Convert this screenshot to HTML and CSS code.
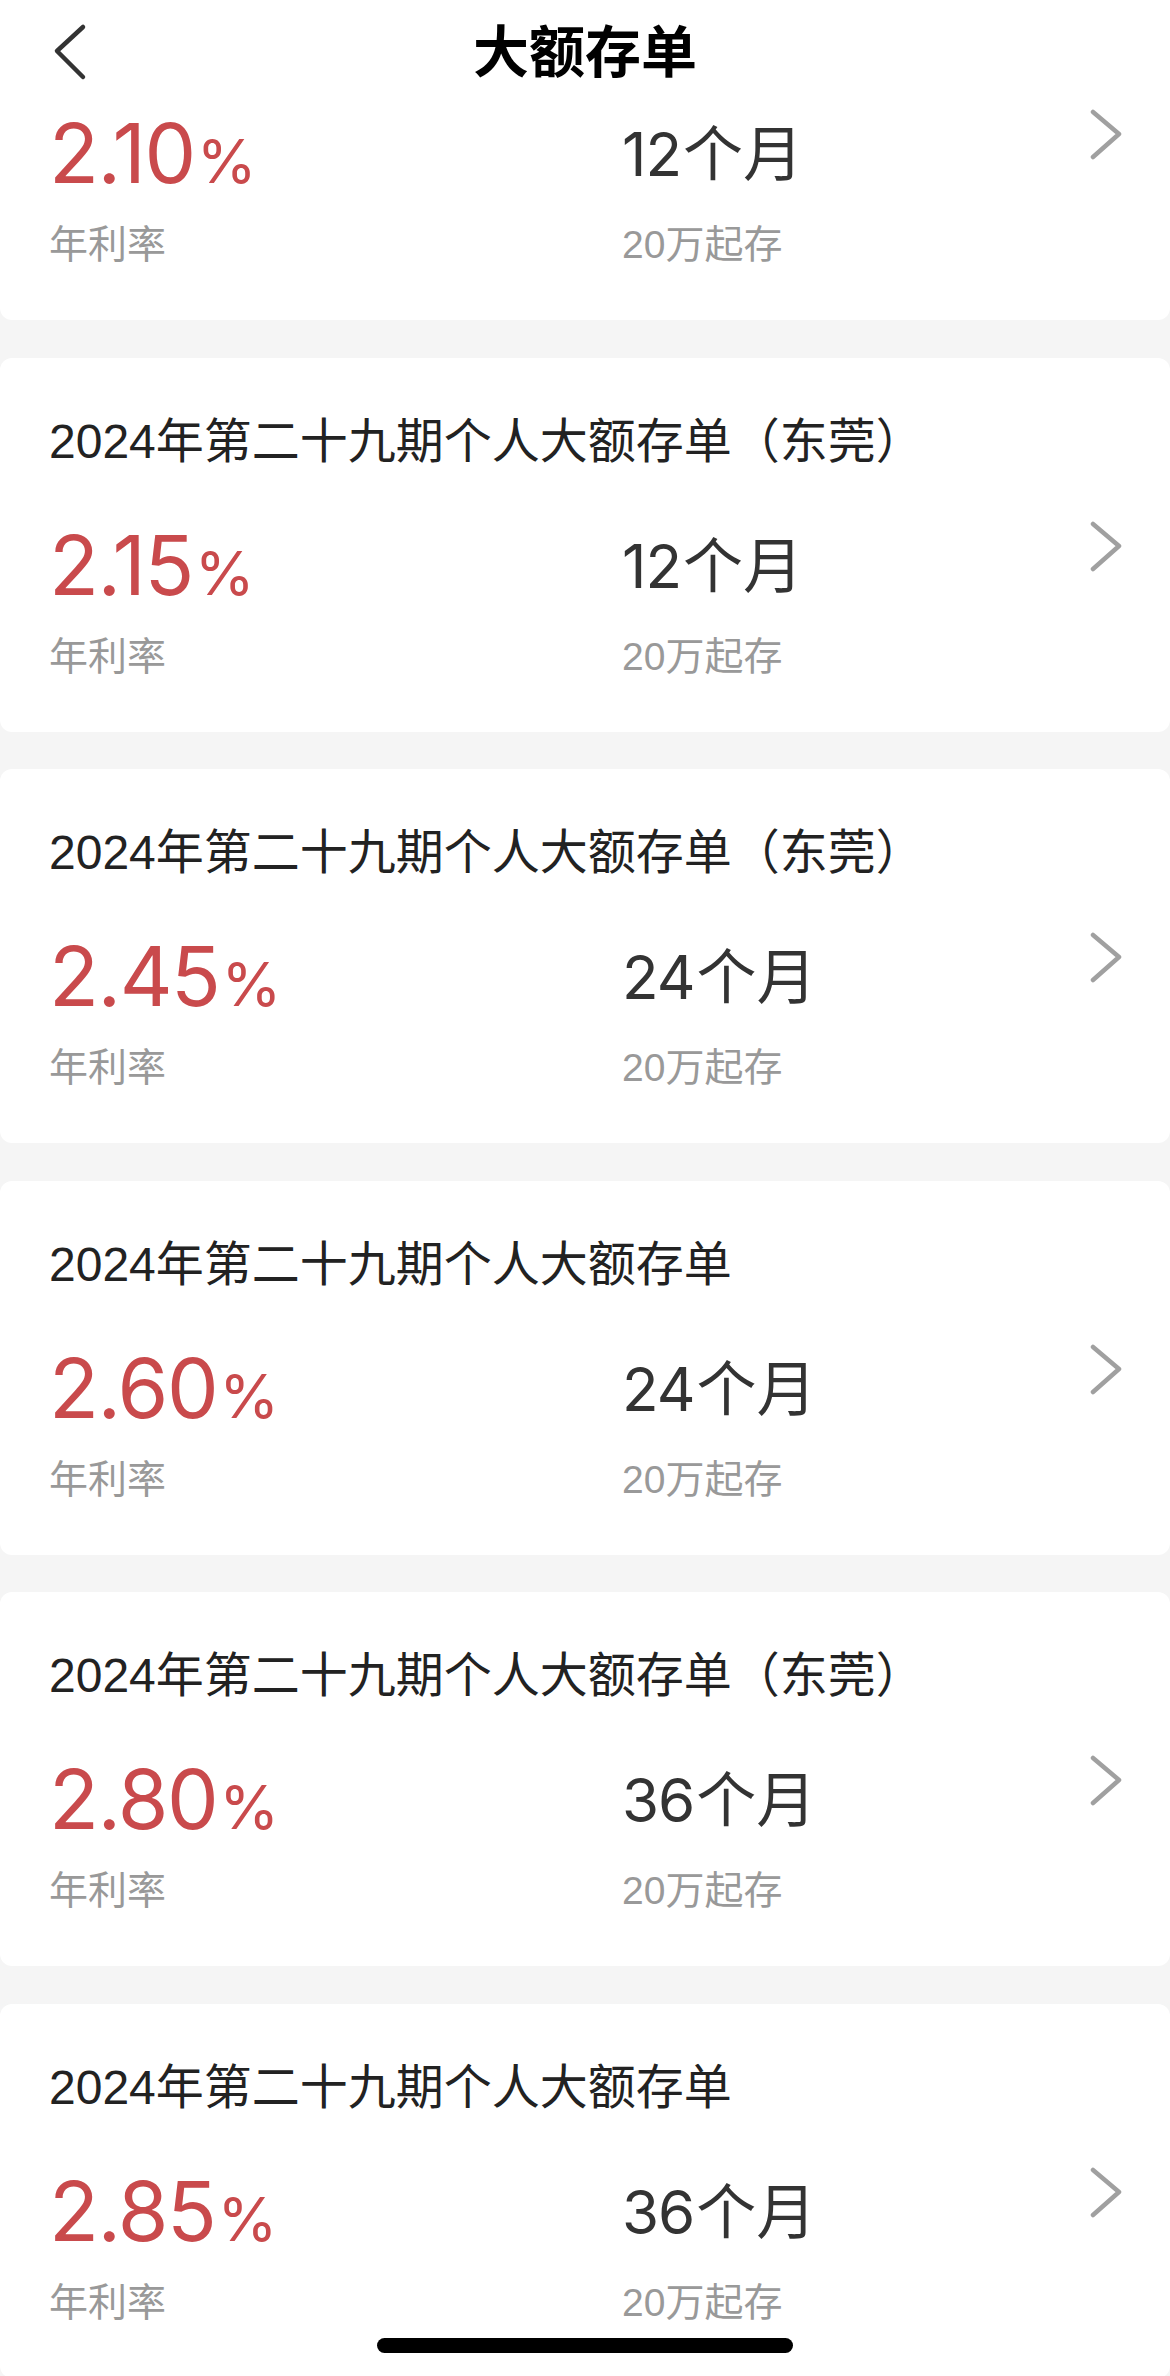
FILE: index.html
```html
<!DOCTYPE html>
<html lang="zh-CN">
<head>
    <meta charset="UTF-8">
    <meta name="viewport" content="width=device-width, initial-scale=1.0">
    <title>大额存单</title>
    <link rel="stylesheet" href="styles.css">
</head>
<body>

<div class="nav">
    <a class="nav-back" href="#">
        <svg width="40" height="60" viewBox="0 0 40 60"><polyline points="30,4 4,28 30,54" fill="none" stroke="#333" stroke-width="4.5" stroke-linecap="round" stroke-linejoin="round"/></svg>
    </a>
    <h1 class="nav-title">大额存单</h1>
    <span></span>
</div>

<div class="list">
    <!-- first card is scrolled up, its title is under the bar -->
    <div class="card card-first">
        <div class="card-body">
            <div class="col">
                <div class="rate"><span class="rate-num">2.10</span><span class="rate-unit">%</span></div>
                <div class="label">年利率</div>
            </div>
            <div class="col">
                <div class="term"><span class="term-num">12</span>个月</div>
                <div class="label">20万起存</div>
            </div>
            <svg class="chevron" width="32" height="51" viewBox="0 0 32 51"><polyline points="3,3 29,25 3,48" fill="none" stroke="#a0a0a0" stroke-width="4.5" stroke-linecap="round" stroke-linejoin="round"/></svg>
        </div>
    </div>

    <div class="card">
        <div class="card-title">2024年第二十九期个人大额存单（东莞）</div>
        <div class="card-body">
            <div class="col">
                <div class="rate"><span class="rate-num">2.15</span><span class="rate-unit">%</span></div>
                <div class="label">年利率</div>
            </div>
            <div class="col">
                <div class="term"><span class="term-num">12</span>个月</div>
                <div class="label">20万起存</div>
            </div>
            <svg class="chevron" width="32" height="51" viewBox="0 0 32 51"><polyline points="3,3 29,25 3,48" fill="none" stroke="#a0a0a0" stroke-width="4.5" stroke-linecap="round" stroke-linejoin="round"/></svg>
        </div>
    </div>

    <div class="card">
        <div class="card-title">2024年第二十九期个人大额存单（东莞）</div>
        <div class="card-body">
            <div class="col">
                <div class="rate"><span class="rate-num">2.45</span><span class="rate-unit">%</span></div>
                <div class="label">年利率</div>
            </div>
            <div class="col">
                <div class="term"><span class="term-num">24</span>个月</div>
                <div class="label">20万起存</div>
            </div>
            <svg class="chevron" width="32" height="51" viewBox="0 0 32 51"><polyline points="3,3 29,25 3,48" fill="none" stroke="#a0a0a0" stroke-width="4.5" stroke-linecap="round" stroke-linejoin="round"/></svg>
        </div>
    </div>

    <div class="card">
        <div class="card-title">2024年第二十九期个人大额存单</div>
        <div class="card-body">
            <div class="col">
                <div class="rate"><span class="rate-num">2.60</span><span class="rate-unit">%</span></div>
                <div class="label">年利率</div>
            </div>
            <div class="col">
                <div class="term"><span class="term-num">24</span>个月</div>
                <div class="label">20万起存</div>
            </div>
            <svg class="chevron" width="32" height="51" viewBox="0 0 32 51"><polyline points="3,3 29,25 3,48" fill="none" stroke="#a0a0a0" stroke-width="4.5" stroke-linecap="round" stroke-linejoin="round"/></svg>
        </div>
    </div>

    <div class="card">
        <div class="card-title">2024年第二十九期个人大额存单（东莞）</div>
        <div class="card-body">
            <div class="col">
                <div class="rate"><span class="rate-num">2.80</span><span class="rate-unit">%</span></div>
                <div class="label">年利率</div>
            </div>
            <div class="col">
                <div class="term"><span class="term-num">36</span>个月</div>
                <div class="label">20万起存</div>
            </div>
            <svg class="chevron" width="32" height="51" viewBox="0 0 32 51"><polyline points="3,3 29,25 3,48" fill="none" stroke="#a0a0a0" stroke-width="4.5" stroke-linecap="round" stroke-linejoin="round"/></svg>
        </div>
    </div>

    <div class="card">
        <div class="card-title">2024年第二十九期个人大额存单</div>
        <div class="card-body">
            <div class="col">
                <div class="rate"><span class="rate-num">2.85</span><span class="rate-unit">%</span></div>
                <div class="label">年利率</div>
            </div>
            <div class="col">
                <div class="term"><span class="term-num">36</span>个月</div>
                <div class="label">20万起存</div>
            </div>
            <svg class="chevron" width="32" height="51" viewBox="0 0 32 51"><polyline points="3,3 29,25 3,48" fill="none" stroke="#a0a0a0" stroke-width="4.5" stroke-linecap="round" stroke-linejoin="round"/></svg>
        </div>
    </div>
</div>

<div class="home-bar"></div>

</body>
</html>
```

FILE: styles.css
```css
body { margin: 0; width: 1170px; height: 2376px; overflow: hidden; background-color: #f5f5f5; font-family: "Liberation Sans", "Noto Sans CJK SC", sans-serif; }

/* top bar */
.nav { height: 106px; background-color: #ffffff; display: grid; grid-template-columns: 1fr auto 1fr; align-items: center; }
.nav-back { display: flex; padding-left: 53px; }
.nav-title { margin: 0; font-size: 56px; font-weight: bold; color: #000; line-height: 64px; }

.list { display: flex; flex-direction: column; gap: 37.5px; }

.card { background-color: #ffffff; border-radius: 12px; height: 374px; box-sizing: border-box; padding: 54px 48px 0 49px; }
.card-first { height: 214px; padding-top: 3px; border-radius: 0 0 12px 12px; }
.card-title { font-size: 48px; line-height: 60px; color: #222; white-space: nowrap; margin-bottom: 49px; }

.card-body { display: flex; align-items: flex-start; }
.col { display: flex; flex-direction: column; }
.col:first-child { width: 573px; }
.col:nth-child(2) { flex: 1; }

.rate, .term { height: 90px; line-height: 90px; white-space: nowrap; font-family: Inter, "Noto Sans CJK SC", sans-serif; }
.rate { font-size: 82px; color: #c94a4c; }
.rate-num { letter-spacing: -1.5px; }
.rate-unit { font-size: 61px; line-height: 61px; margin-left: 2px; }
.term { font-size: 60px; color: #333; }
.term-num { letter-spacing: -1px; margin-right: 2px; }
.label { font-size: 39px; line-height: 48px; color: #999; margin-top: 22px; }

.chevron { flex: none; }

.home-bar { position: fixed; left: 377px; bottom: 23px; width: 416px; height: 15px; border-radius: 8px; background-color: #000; }
```
